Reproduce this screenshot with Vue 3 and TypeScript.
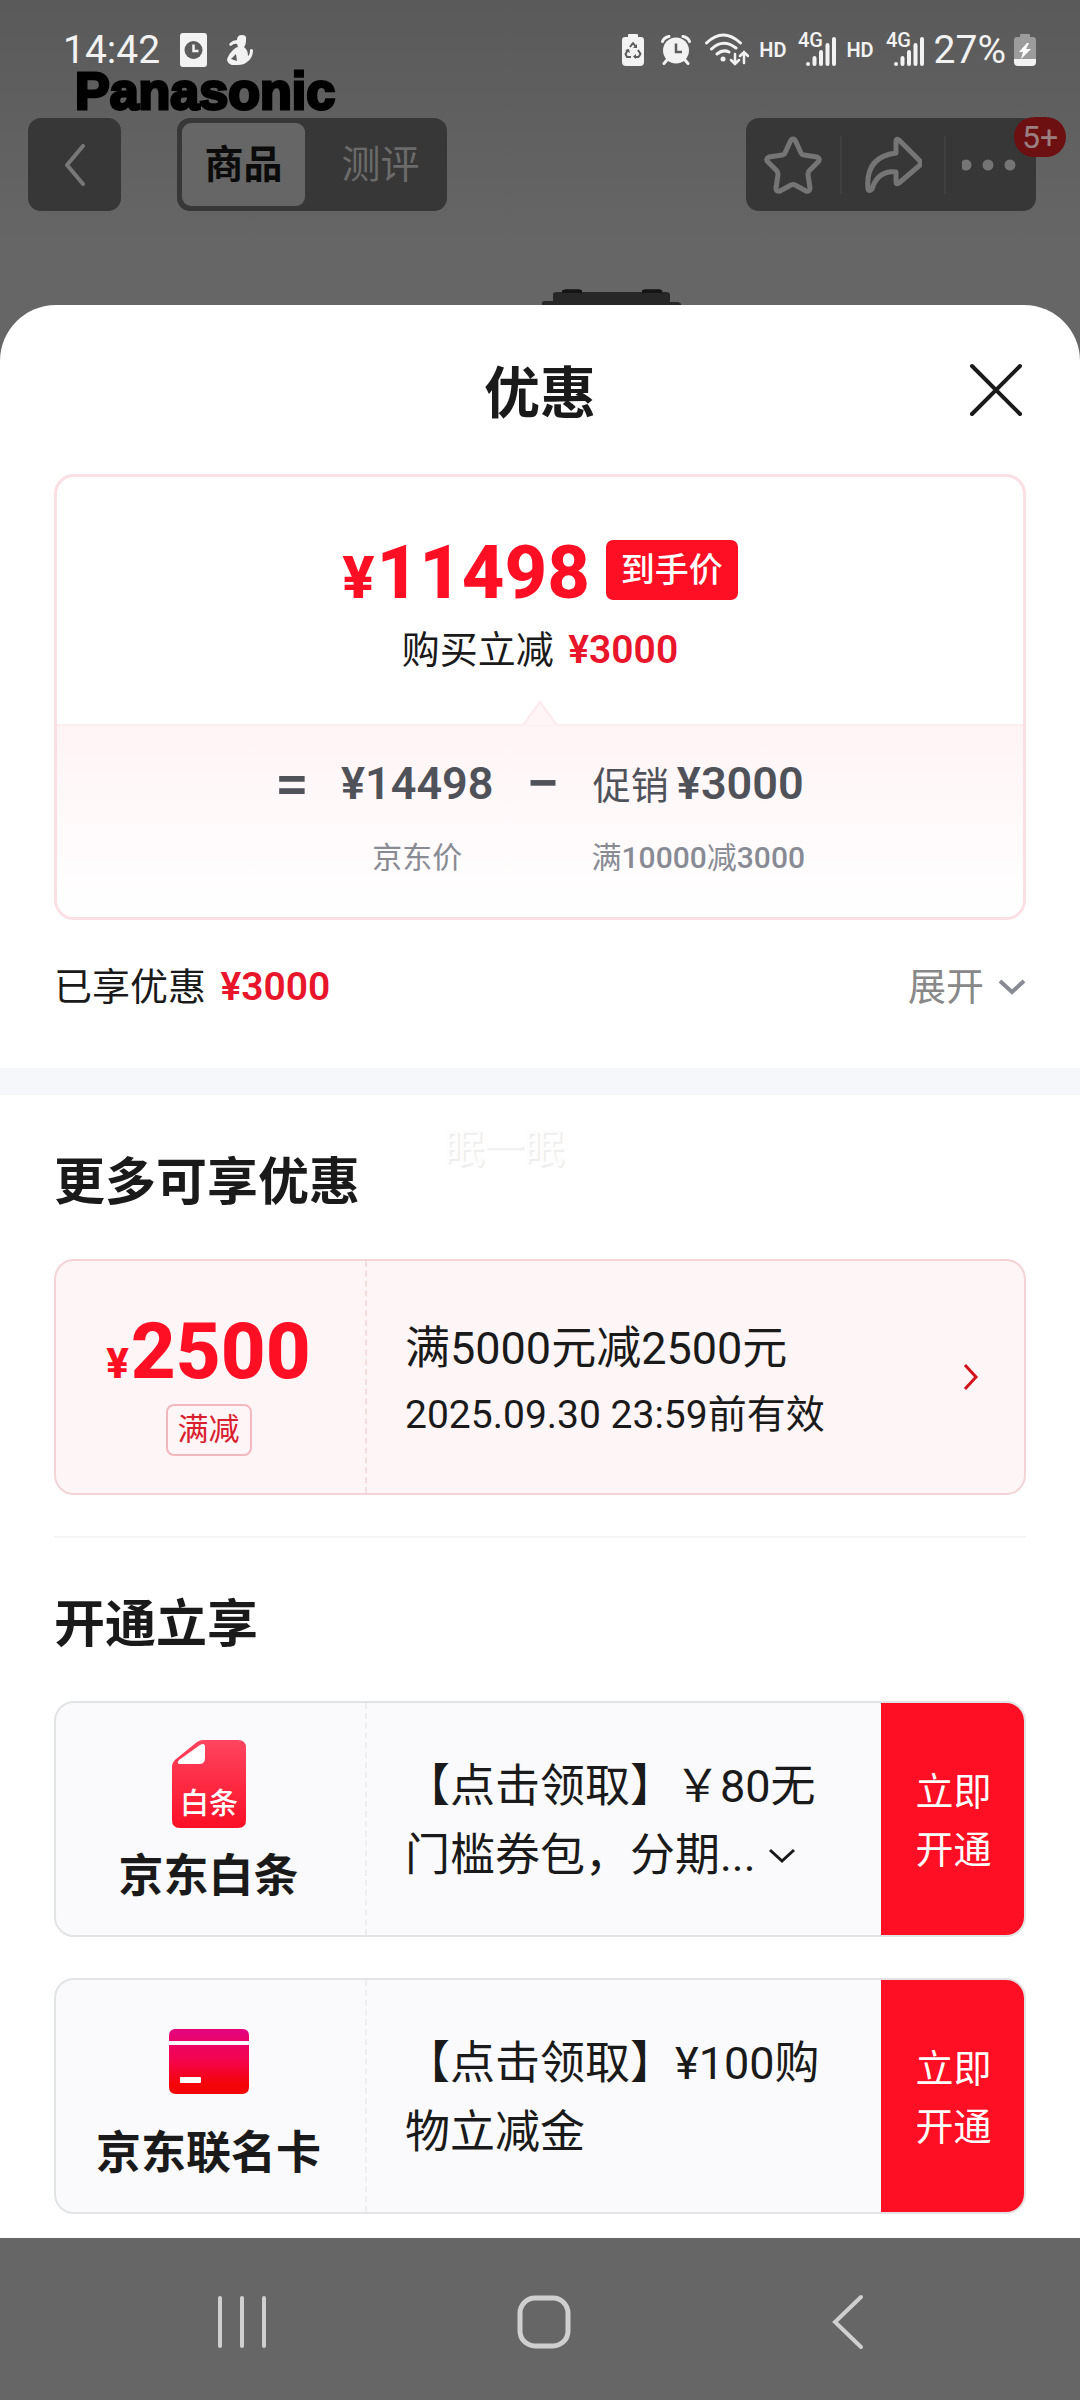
<script setup lang="ts">
interface Offer {
  id: string
  name: string
  lines: string[]
  expandable: boolean
}

const offers: Offer[] = [
  { id: 'baitiao', name: '京东白条', lines: ['【点击领取】￥80无', '门槛券包，分期...'], expandable: true },
  { id: 'card', name: '京东联名卡', lines: ['【点击领取】¥100购', '物立减金'], expandable: false },
]
</script>

<template>
  <div class="page">
    <header class="top">
      <div class="photo" aria-hidden="true">
        <span class="brand">Panasonic</span>
        <svg class="camera" width="142" height="16" viewBox="0 0 142 16">
          <path d="M1 16v-2q0-2 3-2h8V5q0-2 4-2h5l3-3h15l2 3h60l2-3h16l3 3h3q4 0 4 3v7h7q4 0 4 3v1z" fill="#272727" />
          <path d="M21 1h20v3H21zM101 1h20v3h-20z" fill="#151515" />
        </svg>
      </div>

      <div class="status">
        <span class="status-text">14:42</span>
        <svg class="s-doc" width="27" height="34" viewBox="0 0 27 34">
          <rect width="27" height="34" rx="3" fill="#f2f2f2" />
          <circle cx="13.500" cy="17" r="9" fill="#5c5c5c" />
          <path d="M13.500 11.500V18h5" fill="none" stroke="#f2f2f2" stroke-width="2.500" />
        </svg>
        <svg class="s-person" width="26" height="30" viewBox="0 0 26 30" fill="#f2f2f2">
          <path d="M10 5Q10 0 15 0T19 5Q19 10 17 12Q21 15 21 21Q23 20 23 15Q24 13 26 15Q26 23 20 27Q17 30 11 30H5Q1 29 0 25Q1 20 6 15Q9 12 11 12L10 9Q7 8 4 11Q1 10 3 8Q6 5 10 5Z" />
          <path d="M4 24l5-5 1 7z" fill="#5c5c5c" />
        </svg>
        <span class="grow"></span>
        <svg class="s-recycle" width="22" height="32" viewBox="0 0 22 32">
          <path d="M6 3V1q0-1 1-1h8q1 0 1 1v2h3q3 0 3 3v22q0 4-4 4H4q-4 0-4-4V6q0-3 3-3z" fill="#f2f2f2" />
          <path d="M8 13l3-4 3 4M16 16l2.500 4-2 3h-4M9 23H5l-1.500-3L6 16" fill="none" stroke="#5c5c5c" stroke-width="2" stroke-linejoin="round" />
          <path d="M15 10v4h-4zM14 20v5l-3-2.500zM3 16l4-1 1 4z" fill="#5c5c5c" />
        </svg>
        <svg class="s-alarm" width="30" height="30" viewBox="0 0 30 30">
          <path d="M1.500 6.500Q3 2.500 8 1.500M28.500 6.500Q27 2.500 22 1.500M6 25l-3 3.500M24 25l3 3.500" fill="none" stroke="#f2f2f2" stroke-width="3" stroke-linecap="round" />
          <circle cx="15" cy="15.500" r="13" fill="#f2f2f2" />
          <path d="M15 8.500V17h6" fill="none" stroke="#5c5c5c" stroke-width="2.500" />
        </svg>
        <svg class="s-wifi" width="44" height="34" viewBox="0 0 44 34">
          <g fill="none" stroke="#f2f2f2" stroke-width="3" stroke-linecap="round">
            <path d="M1.500 10Q18-6 35.500 10M6.500 16Q18 5 31 15M12 21Q18 16 24 19" />
            <path d="M30 21v10m-4-4l4 4 4-4M39 30V19m-4 4l4-4 4 4" stroke-width="2.500" />
          </g>
          <circle cx="18" cy="26" r="2.500" fill="#f2f2f2" />
        </svg>
        <template v-for="n in 2" :key="n">
          <span class="hd">HD</span>
          <svg class="s-signal" width="38" height="46" viewBox="0 -6 38 46">
            <text x="0" y="14" class="net">4G</text>
            <g stroke="#f2f2f2" stroke-width="4" stroke-linecap="round">
              <path d="M10 31v0M16.500 25v6M23 19v12M29.500 12v19M36 6v25" />
            </g>
          </svg>
        </template>
        <span class="status-text percent">27%</span>
        <svg class="s-battery" width="22" height="32" viewBox="0 0 22 32">
          <path d="M6 3V1q0-1 1-1h8q1 0 1 1v2h3q3 0 3 3v19H0V6q0-3 3-3z" fill="#9c9c9c" />
          <path d="M0 25h22v3q0 4-4 4H4q-4 0-4-4z" fill="#f2f2f2" />
          <path d="M13 9L5 18h4l-2 7 10-10h-5l3-6z" fill="#fff" />
        </svg>
      </div>

      <nav class="toolbar">
        <button class="tool-btn back" type="button" aria-label="返回">
          <svg width="22" height="42" viewBox="0 0 22 42"><path d="M19 2L3 21l16 19" fill="none" stroke="#777" stroke-width="4" stroke-linecap="round" stroke-linejoin="round" /></svg>
        </button>
        <div class="tabs">
          <button class="tab active" type="button">商品</button>
          <button class="tab" type="button">测评</button>
        </div>
        <div class="actions">
          <button class="act" type="button" aria-label="收藏">
            <svg width="58" height="58" viewBox="0 0 58 58"><path d="M29 3Q31 3 32 6L37 17Q38 19 40 19L53 21Q57 23 54 26L45 35Q44 37 44 39L46 52Q46 56 42 55L31 49Q29 48 27 49L16 55Q12 56 12 52L14 39Q14 37 13 35L4 26Q1 23 5 21L18 19Q20 19 21 17L26 6Q27 3 29 3Z" fill="none" stroke="#757575" stroke-width="5" stroke-linejoin="round" /></svg>
          </button>
          <button class="act" type="button" aria-label="分享">
            <svg width="58" height="58" viewBox="0 0 58 58"><path d="M32 5Q32 2 35 4L56 25Q57 27 56 29L35 47Q32 49 32 46V36Q14 34 8 53Q5 56 4 53Q1 21 32 17Z" fill="none" stroke="#757575" stroke-width="5" stroke-linejoin="round" /></svg>
          </button>
          <button class="act" type="button" aria-label="更多">
            <svg width="58" height="58" viewBox="0 0 58 58" fill="#757575"><circle cx="4" cy="29" r="5.500" /><circle cx="26" cy="29" r="5.500" /><circle cx="48" cy="29" r="5.500" /></svg>
          </button>
          <span class="count">5+</span>
        </div>
      </nav>
    </header>

    <main class="sheet">
      <div class="title-row">
        <h1>优惠</h1>
        <button class="close" type="button" aria-label="关闭">
          <svg width="54" height="54" viewBox="0 0 54 54"><path d="M3 3l48 48M51 3L3 51" stroke="#1a1a1a" stroke-width="4" stroke-linecap="round" /></svg>
        </button>
      </div>

      <section class="price-card">
        <div class="price-top">
          <div class="price-row">
            <span class="price"><small>¥</small>11498</span>
            <span class="final">到手价</span>
          </div>
          <p class="line">购买立减 <b>¥3000</b></p>
          <svg class="notch" width="36" height="26" viewBox="0 0 36 26"><path d="M1 25L18 2l17 23" fill="#fff4f6" stroke="#fdeaee" stroke-width="2" /></svg>
        </div>
        <div class="formula">
          <span class="op">=</span>
          <div class="term">
            <span class="amount">¥14498</span>
            <span class="note">京东价</span>
          </div>
          <span class="op">−</span>
          <div class="term">
            <span class="amount"><span class="kind">促销</span>¥3000</span>
            <span class="note">满<b>10000</b>减<b>3000</b></span>
          </div>
        </div>
      </section>

      <div class="enjoyed">
        <p class="line">已享优惠 <b>¥3000</b></p>
        <button class="expand" type="button">
          展开
          <svg width="28" height="16" viewBox="0 0 28 16"><path d="M2 2l12 11L26 2" fill="none" stroke="#888b94" stroke-width="4" /></svg>
        </button>
      </div>

      <div class="band"></div>

      <section class="group">
        <span class="mark" aria-hidden="true">眠一眠</span>
        <h2>更多可享优惠</h2>
        <article class="card coupon">
          <div class="left">
            <span class="value"><small>¥</small>2500</span>
            <span class="tag">满减</span>
          </div>
          <div class="body">
            <p class="rule">满5000元减2500元</p>
            <p class="valid">2025.09.30 23:59前有效</p>
          </div>
          <button class="go" type="button" aria-label="查看">
            <svg width="16" height="28" viewBox="0 0 16 28"><path d="M2 2l11 12L2 26" fill="none" stroke="#d4141c" stroke-width="3" /></svg>
          </button>
        </article>
      </section>

      <section class="group second">
        <h2>开通立享</h2>
        <article v-for="offer in offers" :key="offer.id" class="card offer">
          <div class="left">
            <svg v-if="offer.id === 'baitiao'" class="logo" width="80" height="88" viewBox="0 0 80 88">
              <defs>
                <linearGradient id="bt" x1="0" y1="0" x2="0" y2="1"><stop offset="0" stop-color="#ff4560" /><stop offset="1" stop-color="#fb0f26" /></linearGradient>
              </defs>
              <path d="M34 0H69q8 0 8 8V80q0 8-8 8H11q-8 0-8-8V27q0-5 4-8L28 2q3-2 6-2z" fill="url(#bt)" />
              <path d="M10 20L31 5q5-3 5 2V18q0 6-6 6H11q-4 0-1-4z" fill="#fff" />
              <text x="40" y="74" text-anchor="middle" class="logo-text">白条</text>
            </svg>
            <svg v-else class="logo" width="80" height="88" viewBox="0 0 80 88">
              <defs>
                <linearGradient id="lm" x1="0" y1="12" x2="0" y2="77" gradientUnits="userSpaceOnUse"><stop offset="0" stop-color="#e3057f" /><stop offset=".5" stop-color="#f5044a" /><stop offset=".85" stop-color="#f30407" /></linearGradient>
              </defs>
              <path d="M0 24V19q0-7 7-7H73q7 0 7 7v5zM0 28H80V70q0 7-7 7H7q-7 0-7-7z" fill="url(#lm)" />
              <rect x="11" y="60" width="21" height="6" rx="1" fill="#fff" />
            </svg>
            <span class="name">{{ offer.name }}</span>
          </div>
          <div class="body">
            <p v-for="(text, i) in offer.lines" :key="i" class="desc">
              {{ text }}<button v-if="offer.expandable && i === offer.lines.length - 1" class="more" type="button" aria-label="展开">
                <svg width="28" height="16" viewBox="0 0 28 16"><path d="M2 2l12 11L26 2" fill="none" stroke="#1a1a1a" stroke-width="3" /></svg>
              </button>
            </p>
          </div>
          <button class="open" type="button">立即<br />开通</button>
        </article>
      </section>
    </main>

    <nav class="sysnav">
      <button type="button" aria-label="最近任务">
        <svg width="54" height="56" viewBox="0 0 54 56"><path d="M5 4v48M27 4v48M49 4v48" stroke="#cfcfcf" stroke-width="4" stroke-linecap="round" /></svg>
      </button>
      <button type="button" aria-label="主屏幕">
        <svg width="54" height="56" viewBox="0 0 54 56"><rect x="3" y="4" width="48" height="48" rx="15" fill="none" stroke="#cfcfcf" stroke-width="5" /></svg>
      </button>
      <button type="button" aria-label="返回">
        <svg width="54" height="56" viewBox="0 0 54 56"><path d="M41 3L15 28l26 25" fill="none" stroke="#cfcfcf" stroke-width="4" stroke-linecap="round" /></svg>
      </button>
    </nav>
  </div>
</template>

<style>
body {
  margin: 0;
  background: #666;
}
</style>

<style scoped>
.page {
  font-family: Roboto, "Noto Sans CJK SC", sans-serif;
  color: #1a1a1a;
  background: #666;
  display: flex;
  flex-direction: column;
  min-height: 100vh;
}
h1, h2, p { margin: 0; }
svg { display: block; flex: none; }
button {
  font: inherit;
  color: inherit;
  background: none;
  border: 0;
  padding: 0;
  cursor: pointer;
}

/* dimmed product page */
.top {
  position: relative;
  height: 305px;
  background: linear-gradient(#5a5a5a, #666 80%);
}
.brand {
  position: absolute;
  left: 75px;
  top: 61px;
  font: bold 52px/60px "Liberation Sans", sans-serif;
  color: #000;
  -webkit-text-stroke: 3px #000;
}
.camera {
  position: absolute;
  left: 541px;
  bottom: 0;
}
.status {
  position: relative;
  height: 100px;
  padding: 0 44px 0 63px;
  display: flex;
  align-items: center;
  color: #f2f2f2;
}
.status-text { font-size: 39px; line-height: 48px; }
.s-doc { margin-left: 20px; }
.s-person { margin-left: 20px; }
.grow { flex: 1; }
.s-alarm { margin-left: 17px; }
.s-wifi { margin-left: 14px; }
.hd {
  font-size: 20px;
  line-height: 24px;
  font-weight: 600;
  margin-left: 10px;
}
.s-signal { margin-left: 12px; }
.net {
  font: 500 20px Roboto, sans-serif;
  fill: #f2f2f2;
}
.percent { margin-left: 10px; }
.s-battery { margin-left: 8px; }
.toolbar {
  position: relative;
  margin-top: 18px;
  padding: 0 44px 0 28px;
  display: flex;
}
.tool-btn, .tabs, .actions {
  height: 93px;
  border-radius: 13px;
  background: #373737;
  box-sizing: border-box;
}
.back {
  width: 93px;
  display: grid;
  place-items: center;
}
.tabs {
  display: flex;
  margin-left: 56px;
  padding: 5px;
}
.tab {
  width: 123px;
  border-radius: 9px;
  font-size: 39px;
  line-height: 48px;
  color: #6b6b6b;
}
.tab + .tab { width: 137px; padding-left: 14px; }
.tab.active {
  background: #666;
  color: #0b0b0b;
  font-weight: 700;
}
.actions {
  position: relative;
  display: grid;
  grid-template-columns: 94px 104px 92px;
  align-items: center;
  margin-left: auto;
}
.act {
  height: 58px;
  display: grid;
  place-items: center;
}
.act + .act { border-left: 2px solid #404040; }
.count {
  position: absolute;
  right: -30px;
  top: -1px;
  width: 52px;
  border-radius: 20px;
  background: #6d1012;
  color: #9a8080;
  font-size: 32px;
  line-height: 40px;
  text-align: center;
}

/* discount sheet */
.sheet {
  flex: 1;
  background: #fff;
  border-radius: 56px 56px 0 0;
}
.title-row {
  position: relative;
  padding: 51px 0 42px;
  text-align: center;
}
h1 {
  font-size: 56px;
  line-height: 76px;
  font-weight: 700;
}
.close {
  position: absolute;
  right: 57px;
  top: 58px;
}
.price-card {
  margin: 0 54px;
  border: 3px solid #fadfe4;
  border-radius: 20px;
  overflow: hidden;
}
.price-top {
  position: relative;
  display: flex;
  flex-direction: column;
  align-items: center;
  padding: 56px 0 47px;
}
.price-row {
  display: flex;
  align-items: center;
  gap: 16px;
}
.price {
  font-size: 74px;
  line-height: 80px;
  font-weight: 800;
  color: #ff0f23;
}
small, .kind { line-height: 1; }
.price small { font-size: 60px; margin-right: 2px; }
.final {
  background: #ff0f23;
  color: #fff;
  border-radius: 7px;
  padding: 0 15px;
  font-size: 34px;
  line-height: 60px;
  font-weight: 500;
  margin-bottom: 6px;
}
.price-top .line { margin-top: 10px; }
.line {
  font-size: 38px;
  line-height: 54px;
}
.line b {
  color: #e8152b;
  margin-left: 5px;
  font-size: 39px;
  line-height: 1;
  font-weight: 600;
}
.notch {
  position: absolute;
  left: calc(50% - 18px);
  bottom: -2px;
}
.formula {
  border-top: 2px solid #fdeef0;
  background: linear-gradient(#fff4f6, #fff);
  padding: 28px 0 37px;
  display: flex;
  justify-content: center;
  color: #505259;
}
.op {
  width: 34px;
  font-size: 60px;
  line-height: 60px;
  font-weight: 500;
  text-align: center;
}
.term {
  display: flex;
  flex-direction: column;
  align-items: center;
  gap: 22px;
  margin: 0 32px;
}
.term:last-child { margin-right: 0; }
.amount {
  font-size: 45px;
  line-height: 60px;
  font-weight: 600;
}
.kind {
  font-size: 38px;
  font-weight: 400;
  margin-right: 8px;
}
.note {
  font-size: 30px;
  line-height: 44px;
  color: #888b94;
}
.note b { font-weight: 500; }
.enjoyed {
  margin: 40px 54px 54px;
  display: flex;
  justify-content: space-between;
}
.expand {
  display: flex;
  align-items: center;
  gap: 14px;
  font-size: 38px;
  line-height: 54px;
  color: #888;
}
.band {
  height: 27px;
  background: #f5f7fb;
}
.group {
  position: relative;
  padding: 53px 54px 41px;
}
.second { padding: 0 54px 22px; }
.second::before {
  content: "";
  display: block;
  height: 2px;
  margin-bottom: 52px;
  background: #f5f5f7;
}
.mark {
  position: absolute;
  left: 444px;
  top: 26px;
  font-size: 40px;
  line-height: 56px;
  color: #fdfdfd;
  text-shadow: 2px 2px 1px #eee;
}
h2 {
  font-size: 51px;
  line-height: 70px;
  font-weight: 700;
  margin-bottom: 41px;
}
.card {
  display: flex;
  align-items: stretch;
  height: 236px;
  box-sizing: border-box;
  border-radius: 20px;
  overflow: hidden;
}
.coupon { background: #fef5f6; border: 2px solid #f3d3d6; }
.offer { background: #fafafc; border: 2px solid #e2e3e5; }
.offer + .offer { margin-top: 41px; }
.left {
  width: 311px;
  box-sizing: border-box;
  padding-right: 4px;
  display: flex;
  flex-direction: column;
  align-items: center;
  border-right: 2px dashed #eeeeef;
  flex: none;
}
.coupon .left { border-color: #f6dcdf; }
.value {
  margin-top: 51px;
  font-size: 78px;
  line-height: 80px;
  font-weight: 800;
  color: #ff0f23;
}
.value small { font-size: 42px; margin-right: 2px; }
.tag {
  margin-top: 12px;
  padding: 0 10px;
  border: 2px solid #f3b8bd;
  border-radius: 8px;
  color: #d9202f;
  font-size: 31px;
  line-height: 48px;
}
.body {
  flex: 1;
  padding-left: 38px;
  white-space: nowrap;
}
.rule {
  margin-top: 55px;
  font-size: 45px;
  line-height: 66px;
}
.valid {
  font-size: 39px;
  line-height: 66px;
}
.go { width: 106px; display: grid; place-items: center; }
.logo { margin-top: 37px; }
.name {
  margin-top: 19px;
  font-size: 45px;
  line-height: 60px;
  font-weight: 600;
}
.logo-text {
  font: 500 29px "Noto Sans CJK SC", sans-serif;
  fill: #fff;
}
.offer .body { padding-top: 49px; }
.desc {
  display: flex;
  align-items: center;
  font-size: 45px;
  line-height: 69px;
}
.more { margin-left: 12px; }
.open {
  width: 145px;
  margin: -2px -2px -2px 0;
  padding-top: 4px;
  background: #ff0f23;
  color: #fff;
  font-size: 38px;
  line-height: 58px;
}

.sysnav {
  height: 162px;
  box-sizing: border-box;
  padding: 6px 82px 0 91px;
  display: grid;
  grid-template-columns: repeat(3, 1fr);
}
.sysnav button { display: grid; place-items: center; }
</style>
